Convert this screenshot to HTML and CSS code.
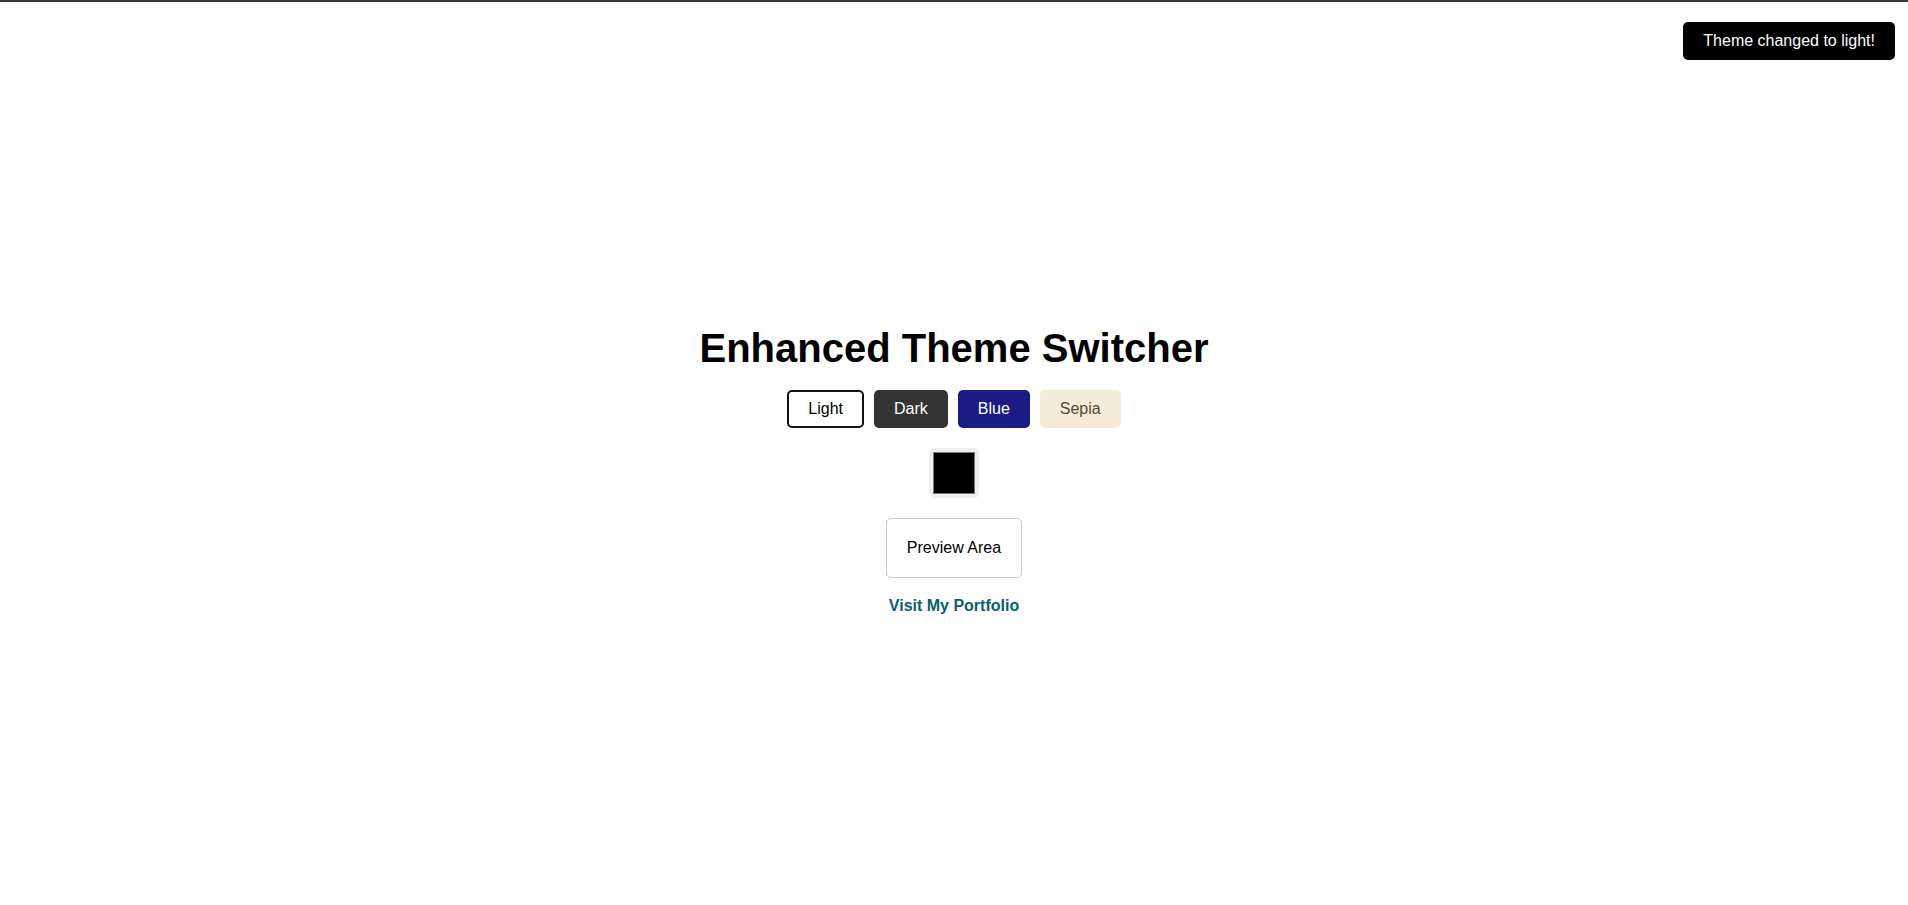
FILE: index.html
```html
<!DOCTYPE html>
<html lang="en">
<head>
<meta charset="utf-8">
<title>Enhanced Theme Switcher</title>
<link rel="stylesheet" href="styles.css">
</head>
<body>
<div class="topbar"></div>
<main class="app">
  <h1 class="title">Enhanced Theme Switcher</h1>
  <div class="themes">
    <button class="theme-btn light active">Light</button>
    <button class="theme-btn dark">Dark</button>
    <button class="theme-btn blue">Blue</button>
    <button class="theme-btn sepia">Sepia</button>
  </div>
  <input class="picker" type="color" value="#000000">
  <div class="preview">Preview Area</div>
  <a class="portfolio" href="#">Visit My Portfolio</a>
</main>
<div class="toast">Theme changed to light!</div>
</body>
</html>
```
FILE: styles.css
```css
html, body {
  margin: 0;
  padding: 0;
  background: #ffffff;
  font-family: "Liberation Sans", Arial, sans-serif;
  color: #000;
}

.topbar {
  height: 2px;
  background: #343b46;
}

.app {
  height: 903px;
  box-sizing: border-box;
  padding-top: 32px;
  display: flex;
  flex-direction: column;
  align-items: center;
  justify-content: center;
}

.title {
  font-size: 40px;
  font-weight: bold;
  margin: 0 0 19px;
  line-height: 46px;
}

.themes {
  display: flex;
  gap: 10px;
  margin-bottom: 20px;
}

.theme-btn {
  font-family: "Liberation Sans", Arial, sans-serif;
  font-size: 16px;
  padding: 8px 18px;
  border: 2px solid transparent;
  border-radius: 5px;
  line-height: normal;
  cursor: pointer;
}

.theme-btn.light { background: #ffffff; color: #000; padding: 8px 19px; }
.theme-btn.light.active { border-color: #111111; }
.theme-btn.dark { background: #333333; color: #ffffff; }
.theme-btn.blue { background: #1b1b85; color: #ffffff; }
.theme-btn.sepia { background: #f4ebd9; color: #5b4636; }

.picker {
  -webkit-appearance: none;
  appearance: none;
  width: 50px;
  height: 50px;
  padding: 0;
  border: none;
  border-radius: 5px;
  background: #efefef;
  margin: 0 0 20px;
  cursor: pointer;
}
.picker::-webkit-color-swatch-wrapper {
  padding: 4px;
}
.picker::-webkit-color-swatch {
  border: 1px solid #777777;
  border-radius: 0;
}

.preview {
  padding: 20px 20px;
  border: 1px solid #cccccc;
  border-radius: 5px;
  font-size: 16px;
  margin-bottom: 19px;
}

.portfolio {
  font-size: 16px;
  font-weight: bold;
  color: #0b6070;
  text-decoration: none;
}

.toast {
  position: fixed;
  top: 22px;
  right: 13px;
  background: #000000;
  color: #ffffff;
  font-size: 16px;
  padding: 10px 20px;
  border-radius: 5px;
}
```
